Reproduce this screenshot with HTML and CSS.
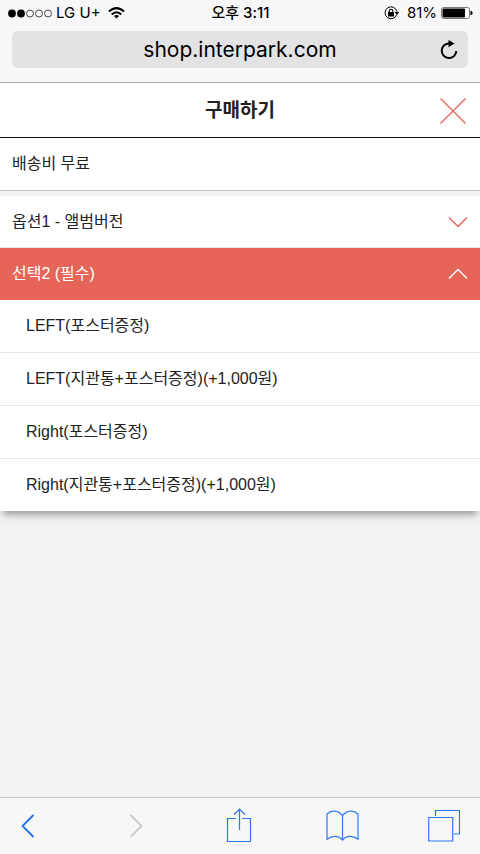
FILE: index.html
```html
<!DOCTYPE html>
<html lang="ko">
<head>
<meta charset="utf-8">
<meta name="viewport" content="width=device-width, initial-scale=1">
<title>구매하기</title>
<link rel="stylesheet" href="styles.css">
</head>
<body>
<header class="browser">
  <div class="status">
    <div class="carrier">
      <svg width="44" height="9" viewBox="0 0 44 9" aria-hidden="true">
        <circle cx="4" cy="4.500" r="3.900"/><circle cx="13" cy="4.500" r="3.900"/>
        <g fill="none" stroke="#222" stroke-width=".8"><circle cx="22" cy="4.500" r="3.500"/><circle cx="31" cy="4.500" r="3.500"/><circle cx="40" cy="4.500" r="3.500"/></g>
      </svg>
      <span>LG U+</span>
      <svg class="wifi" width="17" height="12" viewBox="0 0 17 12" fill="none" stroke="#000" stroke-width="2" aria-hidden="true">
        <path d="M1 4.600Q8.500-2.300 16 4.600"/><path d="M3.700 7.500Q8.500 3.100 13.300 7.500"/><path d="M8.500 11.600 5.900 9Q8.500 6.800 11.100 9Z" fill="#000" stroke="none"/>
      </svg>
    </div>
    <time class="clock">오후 3:11</time>
    <div class="power">
      <svg width="16" height="14" viewBox="0 0 16 14" aria-hidden="true">
        <path d="M12.800 8.500A6 6 0 1 1 12.900 5.500" fill="none" stroke="#000" stroke-width="1"/>
        <path d="M10.500 6h4.800l-2.400 2.800z"/><rect x="4" y="6" width="6" height="4.500" rx=".5"/>
        <path d="M5.200 6.500V5a1.800 1.800 0 0 1 3.600 0v1.500" fill="none" stroke="#000" stroke-width="1.100"/>
      </svg>
      <span>81%</span>
      <svg class="battery" width="32" height="12" viewBox="0 0 32 12" aria-hidden="true">
        <rect x=".5" y=".5" width="28" height="11" rx="2" fill="#fff" stroke="#555" stroke-width=".8"/>
        <rect x="1.500" y="1.500" width="22.500" height="9" rx="1"/><path d="M29.500 3.800q2.200.5 2.200 2.200t-2.200 2.200z"/>
      </svg>
    </div>
  </div>
  <div class="address">
    <input class="url" type="text" value="shop.interpark.com" aria-label="주소">
    <button class="icon-button" type="button" aria-label="새로고침">
      <svg width="18" height="20" viewBox="0 0 18 20" aria-hidden="true">
        <path d="M9.500 3.500A7.300 7.300 0 1 0 16.300 11" fill="none" stroke="#000" stroke-width="2"/><path d="M8.500 0v7.200l6-3.600z"/>
      </svg>
    </button>
  </div>
</header>
<main class="page">
  <div class="titlebar">
    <h1>구매하기</h1>
    <button class="icon-button" type="button" aria-label="닫기">
      <svg width="26" height="26" viewBox="0 0 26 26" fill="none" stroke="#e66558" stroke-width="1.300" aria-hidden="true"><path d="m.5.5 25 25M25.500.5l-25 25"/></svg>
    </button>
  </div>
  <p class="shipping">배송비 무료</p>
  <section class="options">
    <button class="option" type="button" aria-expanded="false">
      <span>옵션1 - 앨범버전</span>
      <svg width="20" height="12" viewBox="0 0 20 12" fill="none" stroke="#e66558" stroke-width="1.400" aria-hidden="true"><path d="m1 1.500 9 9 9-9"/></svg>
    </button>
    <button class="option open" type="button" aria-expanded="true">
      <span>선택2 (필수)</span>
      <svg width="20" height="12" viewBox="0 0 20 12" fill="none" stroke="#fff" stroke-width="1.400" aria-hidden="true"><path d="m1 10.500 9-9 9 9"/></svg>
    </button>
    <ul class="choices">
      <li><button type="button">LEFT(포스터증정)</button></li>
      <li><button type="button">LEFT(지관통+포스터증정)(+1,000원)</button></li>
      <li><button type="button">Right(포스터증정)</button></li>
      <li><button type="button">Right(지관통+포스터증정)(+1,000원)</button></li>
    </ul>
  </section>
</main>
<nav class="toolbar" aria-label="브라우저 도구">
  <button class="icon-button" type="button" aria-label="뒤로">
    <svg width="14" height="24" viewBox="0 0 14 24" fill="none" stroke="#1f71f4" stroke-width="1.800"><path d="M12.500 1 1.500 12l11 11"/></svg>
  </button>
  <button class="icon-button" type="button" aria-label="앞으로" disabled>
    <svg width="14" height="24" viewBox="0 0 14 24" fill="none" stroke="#c8c8c8" stroke-width="1.800"><path d="m1.500 1 11 11-11 11"/></svg>
  </button>
  <button class="icon-button" type="button" aria-label="공유">
    <svg width="26" height="36" viewBox="0 0 26 36" fill="none" stroke="#2b79f5" stroke-width="1.200"><path d="M10 10.500H1.500v23h23v-23H16M13.500 22V1M8 6.500 13.500 1 19 6.500"/></svg>
  </button>
  <button class="icon-button" type="button" aria-label="책갈피">
    <svg width="34" height="32" viewBox="0 0 34 32" fill="none" stroke="#2b79f5" stroke-width="1.200"><path d="M16.500 5.500C12 0 5 0 1 4v25.200c5-4 12-4 15.500 1C20 25.200 27 25.200 32 29.200V4C28 0 21 0 16.500 5.500v24.700"/></svg>
  </button>
  <button class="icon-button" type="button" aria-label="탭">
    <svg width="32" height="34" viewBox="0 0 32 34" fill="none" stroke="#2b79f5" stroke-width="1.200"><path d="M.700 8.500h24v23.500H.700zM7.500 7V1.500h24V25H26"/></svg>
  </button>
</nav>
</body>
</html>
```
FILE: styles.css
```css
* {
  box-sizing: border-box;
}

body {
  margin: 0;
  min-height: 100vh;
  display: flex;
  flex-direction: column;
  background: #f2f2f2;
  color: #222;
  font-family: "Liberation Sans", "Noto Sans CJK KR", sans-serif;
  font-size: 16px;
  line-height: 24px;
}

button {
  border: 0;
  padding: 0;
  background: none;
  color: inherit;
  font: inherit;
  text-align: left;
}

svg {
  display: block;
}

.browser {
  background: #f7f7f7;
  border-bottom: 1px solid #a9a9a9;
  color: #000;
  font-family: Inter, "Noto Sans CJK KR", sans-serif;
}

.status {
  display: grid;
  grid-template-columns: 1fr auto 1fr;
  align-items: center;
  padding: 1px 7px 0 8px;
  font-size: 15px;
}

.carrier,
.power {
  display: flex;
  align-items: center;
  gap: 4px;
}

.wifi {
  margin-left: 3px;
}

.power {
  justify-content: flex-end;
}

.power span {
  margin-left: 3px;
}

.clock {
  font-weight: 500;
}

.address {
  display: flex;
  align-items: center;
  margin: 6px 12px 14px;
  padding: 0 10px 0 28px;
  height: 37px;
  border-radius: 6px;
  background: #e3e3e5;
}

.url {
  flex: 1;
  min-width: 0;
  padding: 0;
  border: 0;
  background: none;
  color: #000;
  font: 21px/28px Inter, sans-serif;
  text-align: center;
}

.page {
  flex: 1;
}

.titlebar {
  display: grid;
  grid-template-columns: 26px 1fr 26px;
  align-items: center;
  height: 55px;
  padding: 2px 14px 0;
  background: #fff;
  border-bottom: 1px solid #111;
}

.titlebar h1 {
  grid-column: 2;
  margin: 0;
  font-size: 19px;
  font-weight: 700;
  text-align: center;
}

.shipping {
  margin: 0 0 5px;
  padding: 14px 12px;
  background: #fff;
  border-bottom: 1px solid #c4c4c4;
}

.options {
  background: #fff;
  box-shadow: 0 7px 7px -3px rgba(0, 0, 0, 0.35);
}

.option {
  display: flex;
  align-items: center;
  justify-content: space-between;
  width: 100%;
  height: 52px;
  padding: 0 12px;
  border-bottom: 1px solid #eaeaea;
}

.option.open {
  border-color: #e66558;
  background: #e66558;
  color: #fff;
}

.choices {
  margin: 0;
  padding: 0;
  list-style: none;
}

.choices button {
  display: block;
  width: 100%;
  padding: 14px 26px;
}

.choices li + li {
  border-top: 1px solid #e9e9e9;
}

.toolbar {
  display: grid;
  grid-template-columns: 108fr 97fr 100fr 102fr auto;
  align-items: center;
  height: 57px;
  padding: 0 20px 0 21px;
  background: #f7f7f7;
  border-top: 1px solid #c2c2c2;
}
```
